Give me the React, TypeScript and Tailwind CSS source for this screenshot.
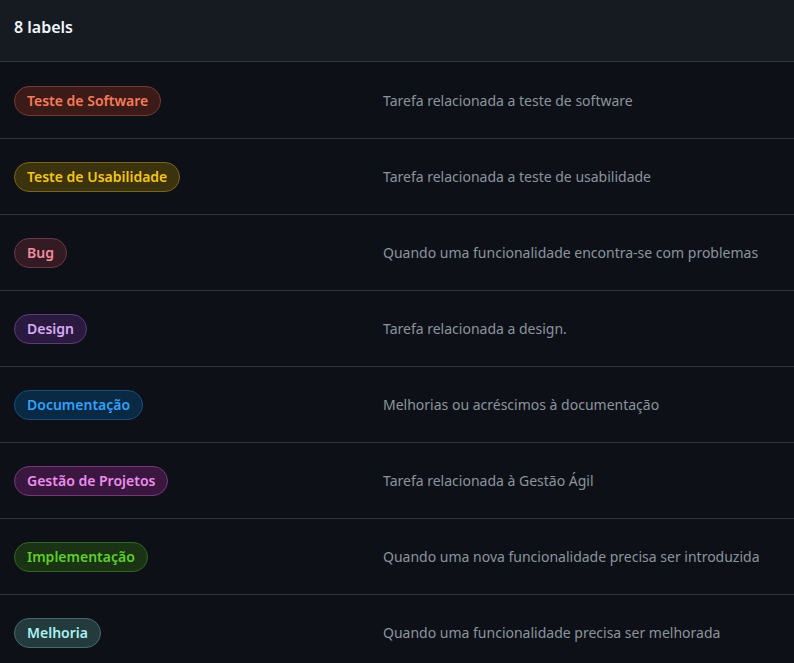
const labels = [
  {
    name: "Teste de Software",
    description: "Tarefa relacionada a teste de software",
    className: "bg-[#3a1b17] border-[#7b3a2d] text-[#fb7a58]",
  },
  {
    name: "Teste de Usabilidade",
    description: "Tarefa relacionada a teste de usabilidade",
    className: "bg-[#3a330d] border-[#7a6715] text-[#f6c60f]",
  },
  {
    name: "Bug",
    description: "Quando uma funcionalidade encontra-se com problemas",
    className: "bg-[#341a22] border-[#6d3946] text-[#f28ba1]",
  },
  {
    name: "Design",
    description: "Tarefa relacionada a design.",
    className: "bg-[#2b1a40] border-[#5b3b7c] text-[#d9aaf6]",
  },
  {
    name: "Documentação",
    description: "Melhorias ou acréscimos à documentação",
    className: "bg-[#0a2943] border-[#154f80] text-[#2ea2ff]",
  },
  {
    name: "Gestão de Projetos",
    description: "Tarefa relacionada à Gestão Ágil",
    className: "bg-[#3a173f] border-[#7a357f] text-[#ee8bee]",
  },
  {
    name: "Implementação",
    description: "Quando uma nova funcionalidade precisa ser introduzida",
    className: "bg-[#1a3315] border-[#2f681f] text-[#5ccf2a]",
  },
  {
    name: "Melhoria",
    description: "Quando uma funcionalidade precisa ser melhorada",
    className: "bg-[#243b3e] border-[#46696c] text-[#a8f1f4]",
  },
];

export default function App() {
  return (
    <div className="min-h-[663px] w-full bg-[#0d1117] font-['Noto_Sans','Open_Sans',sans-serif]">
      <header className="flex h-[62px] items-center border-b border-[#30363d] bg-[#161b22] px-[14px] pb-[8px]">
        <h2 className="text-base font-semibold text-[#f0f6fc]">8 labels</h2>
      </header>
      <div className="pt-px">
        {labels.map((label) => (
          <div
            key={label.name}
            className="flex h-[76px] items-center border-b border-[#30363d] px-[14px] last:border-b-0"
          >
            <div className="w-[369px] shrink-0">
              <span
                className={`inline-flex h-[30px] items-center rounded-full border px-[12px] text-sm font-semibold ${label.className}`}
              >
                {label.name}
              </span>
            </div>
            <p className="text-sm text-[#8b949e]">{label.description}</p>
          </div>
        ))}
      </div>
    </div>
  );
}
